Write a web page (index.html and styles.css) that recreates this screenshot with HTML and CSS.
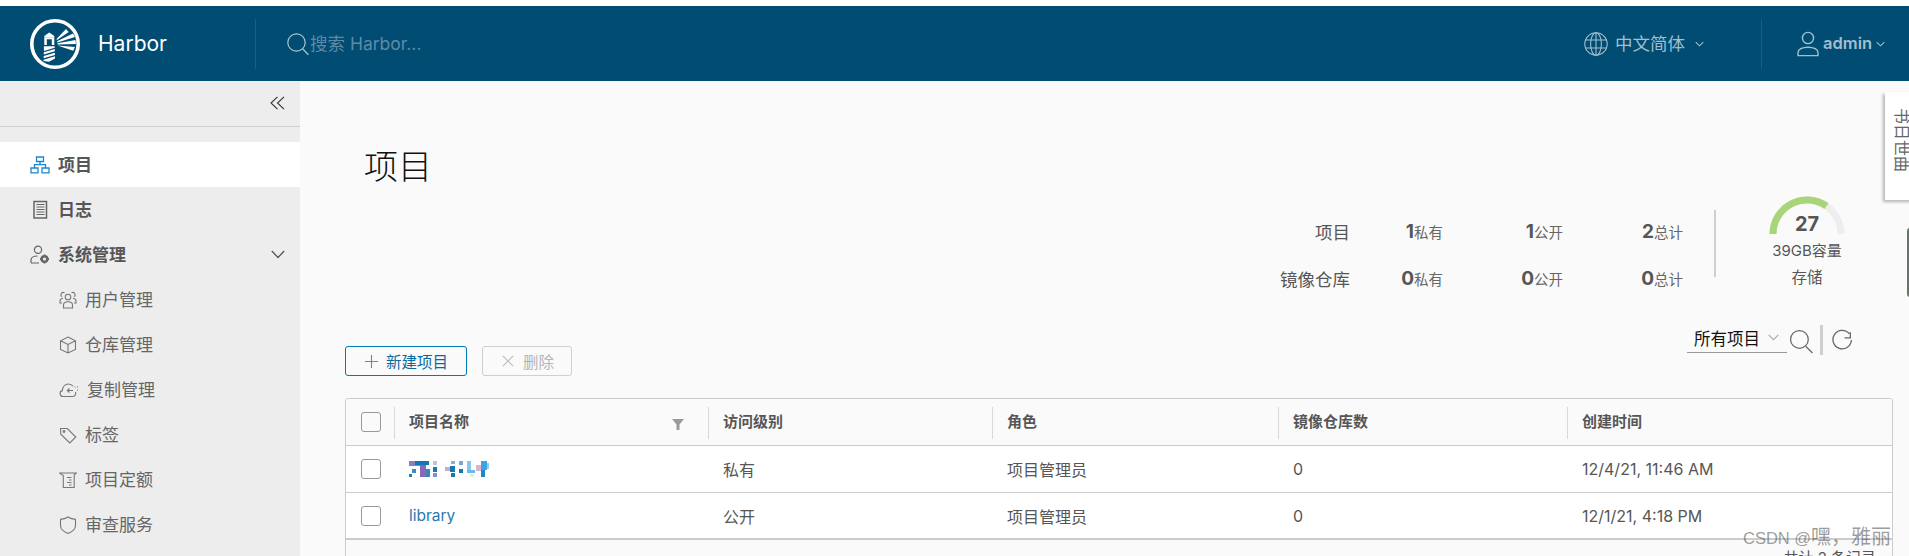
FILE: index.html
```html
<!DOCTYPE html>
<html lang="zh">
<head>
<meta charset="utf-8">
<title>Harbor</title>
<link rel="stylesheet" href="styles.css">
</head>
<body>
<div class="page">
  <header class="topbar">
    <div class="brand">
      <svg class="logo" viewBox="0 0 50 50" width="50" height="50">
        <circle cx="25" cy="25" r="23.200" fill="none" stroke="#fff" stroke-width="3.600"/>
        <path d="M19.300 13.500l-5 3.500v1.200h10V17z" fill="#fff"/>
        <path fill-rule="evenodd" d="M14.300 18.200h10v7.800h-10zM16.800 20.200v5.800h5v-5.800z" fill="#fff"/>
        <path d="M13.900 27.200h10.800v1.500l-10.800 3.200zM13.800 33.200l11-3.200v2.300l-11 3.200zM13.700 37l11.200-3.300v2.300l-11.300 3.300zM13.600 40.700l11.400-3.400v2.300l-6 3.200-5.500-.8z" fill="#fff"/>
        <path d="M26.500 20l9.500-10 2.700 3-11.600 8zM27 22.300l16-7.800 2 3.500-17.600 5.500zM27.500 24.300l18-3.300.5 4-18.300.6zM27.500 26.500l17.500 1.500-1.800 3.700z" fill="#fff"/>
      </svg>
      <span class="brand-name">Harbor</span>
    </div>
    <div class="search">
      <svg class="ico-search" viewBox="0 0 24 24" width="24" height="24"><circle cx="10.500" cy="10.500" r="8.700" fill="none" stroke="#a9c4d1" stroke-width="1.200"/><path d="M16.800 17l5.600 5.800" stroke="#a9c4d1" stroke-width="1.300" fill="none"/></svg>
      <span class="placeholder">搜索 Harbor...</span>
    </div>
    <div class="lang">
      <svg viewBox="0 0 24 24" width="24" height="24" fill="none" stroke="#a3bfcd" stroke-width="1.100"><circle cx="12" cy="12" r="11.200"/><ellipse cx="12" cy="12" rx="5.400" ry="11.200"/><path d="M12 .8v22.400M1.600 8h20.800M1.600 16h20.800"/></svg>
      <span class="lang-name">中文简体</span>
      <svg class="chev-lang" viewBox="0 0 10 6" width="9" height="6" fill="none" stroke="#a3bfcd" stroke-width="1.200"><path d="M.8.8L5 5l4.200-4.200"/></svg>
    </div>
    <div class="user">
      <svg viewBox="0 0 22 26" width="22" height="26" fill="none" stroke="#a3bfcd" stroke-width="1.400"><circle cx="11" cy="7" r="5.600"/><path d="M1 24.600v-3.200c0-3 4-5.200 10-5.200s10 2.200 10 5.200v3.200z"/></svg>
      <span class="user-name">admin</span>
      <svg viewBox="0 0 10 6" width="9" height="6" fill="none" stroke="#a3bfcd" stroke-width="1.200"><path d="M.8.8L5 5l4.200-4.200"/></svg>
    </div>
  </header>

  <div class="workspace">
    <nav class="sidebar">
      <div class="collapse">
        <svg viewBox="0 0 15 14" width="15" height="14" fill="none" stroke="#333" stroke-width="1.100"><path d="M7.500.8L1 7l6.500 6.200M14 .8L7.500 7 14 13.200"/></svg>
      </div>
      <ul class="nav">
        <li class="nav-item is-active">
          <svg viewBox="0 0 20 18" width="20" height="18" fill="none" stroke="#1b87c9" stroke-width="1.300"><path d="M6.500 1h7v4.500h-7zM1 12h7v4.800H1zM12 12h7v4.800h-7zM10 5.500v3.200M4.500 12V8.700h11V12"/></svg>
          <span>项目</span>
        </li>
        <li class="nav-item">
          <svg viewBox="0 0 20 20" width="20" height="20" fill="none" stroke="#666" stroke-width="1.100"><path d="M4 1.500h12.500v16.500H4z" stroke-width="1.500"/><path d="M6.500 4.500h8M6.500 7h8M6.500 9.500h8M6.500 12h8M6.500 14.500h8"/></svg>
          <span>日志</span>
        </li>
        <li class="nav-item">
          <svg viewBox="0 0 20 20" width="20" height="20" fill="none" stroke="#666" stroke-width="1.200"><circle cx="8" cy="4.800" r="3.600"/><path d="M1 18v-3c0-2.500 3-4 6.500-4M1 18h8"/><circle cx="14.500" cy="14" r="2.800" stroke-width="2.400"/><path d="M14.500 9.500v1.500M14.500 17v1.500M10 14h1.500M17.500 14H19" stroke-width="1.800"/></svg>
          <span>系统管理</span>
          <svg class="nav-chev" viewBox="0 0 14 9" width="14" height="9" fill="none" stroke="#555" stroke-width="1.300"><path d="M.8 1l6.200 6.500L13.200 1"/></svg>
        </li>
        <li class="nav-sub">
          <svg viewBox="0 0 18 18" width="18" height="18" fill="none" stroke="#777" stroke-width="1.100"><circle cx="9" cy="6" r="2.800"/><path d="M4.500 17v-3c0-2 2-3.200 4.500-3.200s4.500 1.200 4.500 3.200v3zM5.500 1.800a2.200 2.200 0 0 0-2.500 3.800M12.500 1.800a2.200 2.200 0 0 1 2.500 3.800M3 12H1v-2c0-1.500 1.200-2.500 3-2.800M15 12h2v-2c0-1.500-1.200-2.500-3-2.800"/></svg>
          <span>用户管理</span>
        </li>
        <li class="nav-sub">
          <svg viewBox="0 0 18 18" width="18" height="18" fill="none" stroke="#777" stroke-width="1.100"><path d="M9 1l7.500 3.800v8.600L9 17l-7.500-3.600V4.800zM1.500 4.800L9 8.500l7.500-3.700M9 8.500V17"/></svg>
          <span>仓库管理</span>
        </li>
        <li class="nav-sub">
          <svg viewBox="0 0 20 18" width="20" height="18" fill="none" stroke="#777" stroke-width="1.100"><path d="M16.500 11c1 3-1 4.500-3 4.500H4a3 3 0 0 1-.7-5.900C3.600 6 6 3 9.500 3c2 0 3.500.9 4.500 2.300M14 9.500H8M10.500 7.500l-2.200 2 2.200 2"/><path d="M15.500 6h1M18 6h1M18 9h1"/></svg>
          <span>复制管理</span>
        </li>
        <li class="nav-sub">
          <svg viewBox="0 0 18 18" width="18" height="18" fill="none" stroke="#777" stroke-width="1.100"><path d="M1.500 2.500h6.800l8.500 8.500-6 6-9-8.800z"/><circle cx="5" cy="5.500" r=".9"/></svg>
          <span>标签</span>
        </li>
        <li class="nav-sub">
          <svg viewBox="0 0 18 18" width="18" height="18" fill="none" stroke="#777" stroke-width="1.100"><path d="M.5 2h17l-2.300 1.800V16.500H4.300V4.500z"/><path d="M8 6.500h4.500M10 9h2.500M8 11.500h4.500M10 14h2.500"/></svg>
          <span>项目定额</span>
        </li>
        <li class="nav-sub">
          <svg viewBox="0 0 18 18" width="18" height="18" fill="none" stroke="#777" stroke-width="1.100"><path d="M9 1c2 1.400 4.500 2.200 7.500 2.400v6.100c0 3.500-3 6.200-7.500 7.900-4.500-1.700-7.500-4.400-7.500-7.900V3.400C4.500 3.200 7 2.400 9 1z"/></svg>
          <span>审查服务</span>
        </li>
      </ul>
    </nav>

    <main class="content">
      <h1 class="title">项目</h1>

      <section class="hero">
        <div class="stats">
          <div class="stat-label">项目</div>
          <div class="stat"><b>1</b>私有</div>
          <div class="stat"><b>1</b>公开</div>
          <div class="stat"><b>2</b>总计</div>
          <div class="stat-label">镜像仓库</div>
          <div class="stat"><b>0</b>私有</div>
          <div class="stat"><b>0</b>公开</div>
          <div class="stat"><b>0</b>总计</div>
        </div>
        <div class="hero-divider"></div>
        <div class="gauge">
          <svg viewBox="0 0 76 38" width="76" height="38" fill="none" stroke-width="7"><path d="M4 38a34 34 0 0 1 68 0" stroke="#eeeeee"/><path d="M4 38A34 34 0 0 1 57.500 10.100" stroke="#a8d579"/></svg>
          <div class="gauge-num">27</div>
          <div class="gauge-cap">39GB容量</div>
          <div class="gauge-name">存储</div>
        </div>
      </section>

      <section class="toolbar">
        <div class="actions">
          <button class="btn btn-primary" type="button">
            <svg viewBox="0 0 16 16" width="15" height="15" fill="none" stroke="#3f97cc" stroke-width="1.200"><path d="M8 1v14M1 8h14"/></svg>
            新建项目
          </button>
          <button class="btn btn-disabled" type="button">
            <svg viewBox="0 0 14 14" width="12" height="12" fill="none" stroke="#bbb" stroke-width="1.200"><path d="M1 1l12 12M13 1L1 13"/></svg>
            删除
          </button>
        </div>
        <div class="tools">
          <div class="select">
            <span>所有项目</span>
            <svg viewBox="0 0 10 6" width="11" height="7" fill="none" stroke="#aaa" stroke-width="1"><path d="M.6.6L5 5l4.400-4.400"/></svg>
          </div>
          <svg class="tool-search" viewBox="0 0 24 24" width="25" height="25" fill="none" stroke="#666" stroke-width="1.200"><circle cx="10" cy="10" r="8.500"/><path d="M16 16.500l6.500 6.500"/></svg>
          <div class="tool-divider"></div>
          <svg class="tool-refresh" viewBox="0 0 20 20" width="21" height="21" fill="none" stroke="#666" stroke-width="1.200"><path d="M17.500 3v5.500H12M18.500 10.500a8.800 8.800 0 1 1-2-6"/></svg>
        </div>
      </section>

      <section class="grid">
        <div class="row row-head">
          <div class="cell cell-check"><span class="check"></span></div>
          <div class="cell cell-name">项目名称
            <svg class="filter" viewBox="0 0 12 11" width="12" height="11"><path d="M0 0h12L7.500 5.500V11h-3V5.500z" fill="#9a9a9a"/></svg>
          </div>
          <div class="cell">访问级别</div>
          <div class="cell">角色</div>
          <div class="cell">镜像仓库数</div>
          <div class="cell">创建时间</div>
        </div>
        <div class="row">
          <div class="cell cell-check"><span class="check"></span></div>
          <div class="cell cell-name">
            <svg class="mosaic" viewBox="0 0 80 16" width="80" height="16">
              <rect x="0" y="0" width="11" height="5" fill="#7e86c0"/><rect x="6" y="0" width="14" height="4" fill="#1578b5"/><rect x="11" y="4" width="6" height="12" fill="#8769b8"/><rect x="3" y="8" width="4" height="4" fill="#3b8cc2"/><rect x="0" y="13" width="3" height="3" fill="#2a7cb6"/><rect x="17" y="8" width="4" height="8" fill="#3d84bd"/>
              <rect x="24" y="0" width="4" height="4" fill="#b8c6e2"/><rect x="24" y="6" width="4" height="5" fill="#1d77b3"/><rect x="24" y="12" width="4" height="4" fill="#7c92c8"/>
              <rect x="36" y="6" width="5" height="4" fill="#c3add0"/><rect x="42" y="0" width="4" height="3" fill="#7fb3d8"/><rect x="41" y="5" width="5" height="6" fill="#1578b5"/><rect x="42" y="12" width="4" height="4" fill="#1578b5"/>
              <rect x="50" y="0" width="4" height="4" fill="#7aa9d0"/><rect x="50" y="8" width="4" height="4" fill="#1578b5"/>
              <rect x="58" y="0" width="4" height="9" fill="#7fc9ef"/><rect x="58" y="9" width="8" height="3" fill="#6db8e8"/><rect x="61" y="13" width="4" height="3" fill="#e7eedd"/>
              <rect x="67" y="4" width="5" height="6" fill="#d8b5cf"/><rect x="72" y="0" width="6" height="9" fill="#3ea4e0"/><rect x="72" y="9" width="4" height="7" fill="#1b88c9"/><rect x="78" y="2" width="2" height="6" fill="#8fd0f2"/>
            </svg>
          </div>
          <div class="cell">私有</div>
          <div class="cell">项目管理员</div>
          <div class="cell">0</div>
          <div class="cell">12/4/21, 11:46 AM</div>
        </div>
        <div class="row row-last">
          <div class="cell cell-check"><span class="check"></span></div>
          <div class="cell cell-name"><a class="link">library</a></div>
          <div class="cell">公开</div>
          <div class="cell">项目管理员</div>
          <div class="cell">0</div>
          <div class="cell">12/1/21, 4:18 PM</div>
        </div>
        <div class="grid-foot">共计 2 条记录</div>
      </section>
    </main>
  </div>

  <aside class="side-tab"><span>书日世曲</span></aside>
  <div class="edge-widget"></div>
  <div class="watermark">CSDN @<span class="wm-cjk">嘿，雅丽</span></div>
</div>
</body>
</html>
```

FILE: styles.css
```css
* { box-sizing: border-box; }
html, body { margin: 0; padding: 0; height: 556px; overflow: hidden; background: #fff; }
body { font-family: "Inter", "Noto Sans CJK SC", sans-serif; color: #565656; }
svg { display: block; flex: none; }

.page { position: relative; width: 1909px; height: 556px; padding-top: 6px; overflow: hidden; }

/* top bar */
.topbar { display: flex; align-items: center; height: 75px; background: #004c73; }
.brand { display: flex; align-items: center; width: 256px; height: 50px; padding-left: 30px; border-right: 1px solid #1a5f82; }
.brand-name { margin-left: 18px; font-size: 21px; color: #fff; }
.search { display: flex; align-items: center; flex: 1; padding-left: 30px; }
.placeholder { margin-bottom: 2px; font-size: 17.500px; color: #5e8ba3; }
.lang { display: flex; align-items: center; width: 178px; height: 50px; border-right: 1px solid #1a5f82; }
.lang-name { margin: 0 0 2px 7px; font-size: 17.500px; color: #a3bfcd; }
.chev-lang { margin-left: 10px; }
.user { display: flex; align-items: center; width: 147px; padding-left: 35px; }
.user-name { margin: 0 4px 2px 4px; font-size: 16.500px; font-weight: 600; color: #a3bfcd; }

/* layout */
.workspace { display: flex; height: 475px; }
.sidebar { width: 300px; flex: none; background: #ededed; }
.collapse { display: flex; align-items: center; justify-content: flex-end; height: 46px; padding: 0 15px 2px 0; border-bottom: 1px solid #cfcfcf; }
.nav { list-style: none; margin: 15px 0 0; padding: 0; }
.nav-item, .nav-sub { display: flex; align-items: center; height: 45px; font-size: 17px; }
.nav-item { padding-left: 30px; font-weight: 700; color: #565656; }
.nav-item span { margin: 0 0 2px 8px; }
.nav-item.is-active { background: #fff; }
.nav-chev { margin-left: auto; margin-right: 15px; }
.nav-sub { padding-left: 59px; color: #666; }
.nav-sub span { margin: 0 0 2px 8px; }

.content { flex: 1; min-width: 0; padding: 62px 16px 0 45px; background: #fafafa; }
.title { margin: 0 0 0 19px; height: 48px; font-size: 34px; font-weight: 300; line-height: 48px; color: #111; }

/* summary */
.hero { display: flex; justify-content: flex-end; height: 129px; margin-top: 5px; }
.stats { display: grid; grid-template-columns: 110px 93px 120px 120px; grid-auto-rows: 47px; margin-top: 12px; }
.stat-label { display: flex; align-items: center; justify-content: flex-end; font-size: 17.500px; color: #565656; }
.stat { display: flex; align-items: center; justify-content: flex-end; font-size: 14.500px; color: #666; }
.stat b { font-size: 19px; font-weight: 700; color: #565656; }
.hero-divider { width: 2px; height: 67px; margin: 14px 36px 0 31px; background: #cfcfcf; }
.gauge { display: flex; flex-direction: column; align-items: center; width: 110px; margin-right: 31px; }
.gauge-num { height: 24px; margin-top: -22px; font-size: 20px; font-weight: 700; line-height: 24px; }
.gauge-cap { height: 20px; margin-top: 5px; font-size: 15px; line-height: 20px; white-space: nowrap; }
.gauge-name { height: 20px; margin-top: 7px; font-size: 15.500px; line-height: 20px; }

/* toolbar */
.toolbar { display: flex; justify-content: space-between; height: 51px; }
.actions { display: flex; align-items: flex-end; gap: 15px; }
.btn { display: flex; align-items: center; height: 30px; padding: 0; border-radius: 3px; background: transparent; font-family: inherit; font-size: 15.500px; }
.btn-primary { width: 122px; padding-left: 18px; gap: 7px; border: 1px solid #0079b8; color: #0a6aa0; }
.btn-disabled { width: 90px; padding-left: 19px; gap: 9px; border: 1px solid #cfcfcf; color: #b5b5b5; }
.tools { display: flex; align-items: flex-start; }
.select { display: flex; align-items: center; justify-content: space-between; width: 100px; height: 28px; padding: 0 8px 2px 7px; border-bottom: 1px solid #999; font-size: 16.500px; color: #111; }
.tool-search { margin: 4px 0 0 2px; }
.tool-divider { width: 3px; height: 30px; margin-left: 6px; background: #cfcfcf; }
.tool-refresh { margin: 4px 40px 0 9px; }

/* data grid */
.grid { margin-top: 22px; border: 1px solid #ccc; border-radius: 3px; overflow: hidden; background: #fafafa; }
.row { display: grid; grid-template-columns: 49px 314px 284px 286px 289px 1fr; height: 47px; background: #fff; border-bottom: 1px solid #ccc; font-size: 16px; color: #565656; }
.row-last { border-bottom-width: 2px; }
.row-head { background: #fafafa; font-size: 15px; font-weight: 700; }
.cell { position: relative; display: flex; align-items: center; padding-left: 14px; white-space: nowrap; }
.cell-check { padding-left: 15px; }
.row-head .cell { padding-bottom: 4px; }
.row-head .cell-check { padding-bottom: 0; }
.row-head .cell::after { content: ""; position: absolute; right: 0; top: 8px; height: 32px; width: 1px; background: #d8d8d8; }
.row-head .cell:last-child::after { display: none; }
.check { display: block; width: 20px; height: 20px; border: 1px solid #999; border-radius: 3px; background: #fff; }
.row-head .check { background: transparent; }
.filter { margin-left: auto; margin-right: 25px; margin-top: 9px; }
.link { color: #2a78ad; font-size: 15.500px; }
.grid-foot { height: 40px; padding: 8px 16px 0 0; text-align: right; font-size: 15px; line-height: 20px; color: #565656; }

/* overlays */
.side-tab { position: absolute; left: 1885px; top: 92px; width: 30px; height: 108px; padding: 16px 0 0 9px; background: #fff; box-shadow: -2px 2px 3px rgba(0,0,0,.28); font-size: 16px; line-height: 16px; color: #666; }
.side-tab span { writing-mode: vertical-rl; text-orientation: sideways; display: block; }
.edge-widget { position: absolute; left: 1907px; top: 228px; width: 6px; height: 69px; border-radius: 3px; background: #67746b; }
.watermark { position: absolute; left: 1743px; top: 526px; font-family: "Liberation Sans", "Noto Sans CJK SC", sans-serif; font-size: 16.500px; line-height: 22px; color: rgba(60,60,60,.5); white-space: nowrap; }
.wm-cjk { font-size: 20px; }
```
